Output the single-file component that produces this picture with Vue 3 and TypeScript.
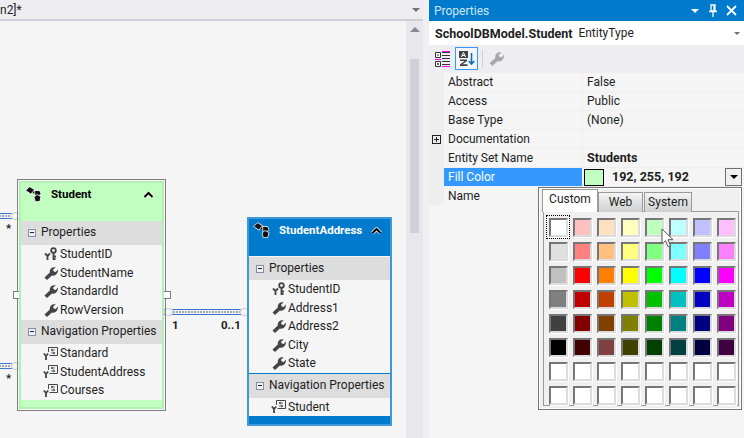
<template>
	<div class="shell">
		<section class="designer">
			<header class="doc-tab">
				<span class="doc-name">n2]*</span>
				<span class="doc-arrow"></span>
			</header>
			<div class="doc-body">
				<div class="canvas">
					<div class="link link-a"></div>
					<div class="link link-b"></div>
					<div class="link link-c"></div>
					<span class="end-label star-a">*</span>
					<span class="end-label star-b">*</span>
					<span class="end-label one">1</span>
					<span class="end-label many">0..1</span>

					<div class="selection">
						<i class="handle h-left"></i>
						<i class="handle h-right"></i>
					</div>

					<article v-for="entity in entities" :key="entity.name" :class="['entity', entity.kind]">
						<div class="entity-head">
							<svg class="entity-icon" width="17" height="16" viewBox="0 0 17 16">
								<path d="M7 5l5 3M12 6v6" stroke="#111" stroke-width="2.500" fill="none" />
								<path d="M.7 4.500 4.500.7 9.500 3.500 6 8.200z" fill="#111" stroke="#fff" stroke-width=".8" />
								<path d="M9.500 4.500h5l1.500 3-2 2.500h-4z" fill="#111" stroke="#fff" stroke-width=".8" />
								<path d="M9 11l3-2.500 4 2-1.200 5-4.500.2z" fill="#111" stroke="#fff" stroke-width=".8" />
							</svg>
							<span class="entity-name">{{ entity.name }}</span>
							<svg class="chevron" width="11" height="8" viewBox="0 0 11 8">
								<path d="M1.500 6 5.500 2l4 4" fill="none" stroke="#fff" stroke-width="3.600" />
								<path d="M1.500 6 5.500 2l4 4" fill="none" stroke="#000" stroke-width="2" />
							</svg>
						</div>

						<div class="section-bar">
							<i class="collapse"></i>
							<span>Properties</span>
						</div>
						<div class="rows">
							<div v-for="(prop, index) in entity.props" :key="prop" class="row">
								<svg v-if="index === 0" class="row-icon" width="14" height="14" viewBox="0 0 14 14">
									<circle cx="9.500" cy="3.500" r="2.300" fill="none" stroke="#444" stroke-width="1.800" />
									<path d="M9.500 6v7M9.500 9.500h2.500M9.500 12h2" stroke="#444" stroke-width="1.800" fill="none" />
									<path d="M1 6.500 3.500 9 6 6.500M3.500 9v4" stroke="#444" stroke-width="1.800" fill="none" />
								</svg>
								<svg v-else class="row-icon" width="14" height="14" viewBox="0 0 14 14">
									<path d="M.5 11.500 5.800 6.500C5.300 3 7.800.5 11.800 1.300L9 3.800l.8 1.700 1.900.4L13.900 3.500c.5 4-2.500 7-6 6L3 14z" fill="#444" />
								</svg>
								<span>{{ prop }}</span>
							</div>
						</div>

						<div class="section-bar nav-bar">
							<i class="collapse"></i>
							<span>Navigation Properties</span>
						</div>
						<div class="rows">
							<div v-for="nav in entity.navs" :key="nav" class="row">
								<svg class="row-icon nav-icon" width="16" height="15" viewBox="0 0 16 15">
									<path d="M5.500 6V1.500h9v8h-8" fill="#f5f5f5" stroke="#444" stroke-width="1" />
									<path d="M8 4h4M10 3l-2 1 2 1M8 7h4M10 6l2 1-2 1" stroke="#444" stroke-width=".8" fill="none" />
									<path d="M.8 7.500 3 10l2.200-2.500M3 10v4" stroke="#444" stroke-width="1.800" fill="none" />
								</svg>
								<span>{{ nav }}</span>
							</div>
						</div>
						<div class="entity-foot"></div>
					</article>
				</div>
				<aside class="vscroll">
					<span class="scroll-up"></span>
					<span class="scroll-thumb"></span>
				</aside>
			</div>
		</section>

		<div class="splitter"></div>

		<section class="props">
			<header class="props-title">
				<span>Properties</span>
				<span class="grip"></span>
				<span class="title-arrow"></span>
				<svg width="10" height="13" viewBox="0 0 10 13" class="pin">
					<path d="M3 1h4v6H3zM1 7.500h8M5 8v5M6 1.500v5" fill="none" stroke="#fff" stroke-width="1.300" />
				</svg>
				<svg width="11" height="11" viewBox="0 0 11 11" class="close">
					<path d="M1 1l9 9M10 1l-9 9" stroke="#fff" stroke-width="1.800" />
				</svg>
			</header>
			<div class="object-row">
				<b>SchoolDBModel.Student</b>
				<span>EntityType</span>
				<i class="object-arrow"></i>
			</div>
			<div class="toolbar">
				<svg width="16" height="16" viewBox="0 0 16 16">
					<path d="M.5 1.500h5v5h-5zM.5 10.500h5v5h-5z" fill="#fff" stroke="#333" />
					<path d="M2 4h2M2 13h2M3 12v2" stroke="#333" />
					<path d="M7 1.500h8M7 4.500h8M7 7.500h8M7 10.500h8M7 13.500h8" stroke="#333" />
					<path d="M0 8.500h6M7 .5h8M7 15.500h8" stroke="#f0f" />
				</svg>
				<button class="sort-btn" type="button">
					<svg width="16" height="15" viewBox="0 0 16 15">
						<rect x="0" y="0" width="9" height="7" fill="#444" />
						<path d="M2.500 6 4.500 1.500l2 4.500M3.300 4.500h2.400" fill="none" stroke="#fff" />
						<path d="M1 8.500h7v1.500l-4.500 3.200H8.500V15H1v-1.500L5.500 10H1z" fill="#444" />
						<path d="M12.500 2v11M9.800 10l2.700 3 2.700-3" fill="none" stroke="#0e70c0" stroke-width="1.600" />
					</svg>
				</button>
				<i class="tool-sep"></i>
				<svg width="15" height="15" viewBox="0 0 14 14">
					<path d="M.5 11.500 5.800 6.500C5.300 3 7.800.5 11.800 1.300L9 3.800l.8 1.700 1.900.4L13.900 3.500c.5 4-2.500 7-6 6L3 14z" fill="#a8a8a8" />
				</svg>
			</div>
			<div class="grid">
				<div v-for="row in gridRows" :key="row.name" class="grid-row">
					<div class="gutter">
						<i v-if="row.expandable" class="expander"></i>
					</div>
					<div :class="['cell-name', { selected: row.selected }]">{{ row.name }}</div>
					<div :class="['cell-value', { strong: row.strong }]">
						<template v-if="row.selected">
							<i class="swatch"></i>
							<span>{{ row.value }}</span>
							<button class="drop-btn" type="button"><i></i></button>
						</template>
						<template v-else>{{ row.value }}</template>
					</div>
				</div>
			</div>

			<div class="picker">
				<div class="tabs">
					<span v-for="tab in tabs" :key="tab" :class="['tab', tab.toLowerCase()]">{{ tab }}</span>
				</div>
				<div class="palette">
					<i
						v-for="(color, index) in palette"
						:key="index"
						:class="['color', { current: index === 0 }]"
						:style="{ background: color }"
					></i>
				</div>
				<svg class="cursor" width="14" height="21" viewBox="0 0 14 21">
					<path d="M1 1v15l3.500-3.300 2.500 6 2.500-1-2.500-6H12z" fill="#fff" stroke="#555" />
				</svg>
			</div>
		</section>
	</div>
</template>

<script setup lang="ts">
interface Entity {
	name: string;
	kind: 'green' | 'blue';
	props: string[];
	navs: string[];
}

interface GridRow {
	name: string;
	value: string;
	strong?: boolean;
	selected?: boolean;
	expandable?: boolean;
}

const entities: Entity[] = [
	{
		name: 'Student',
		kind: 'green',
		props: ['StudentID', 'StudentName', 'StandardId', 'RowVersion'],
		navs: ['Standard', 'StudentAddress', 'Courses'],
	},
	{
		name: 'StudentAddress',
		kind: 'blue',
		props: ['StudentID', 'Address1', 'Address2', 'City', 'State'],
		navs: ['Student'],
	},
];

const gridRows: GridRow[] = [
	{ name: 'Abstract', value: 'False' },
	{ name: 'Access', value: 'Public' },
	{ name: 'Base Type', value: '(None)' },
	{ name: 'Documentation', value: '', expandable: true },
	{ name: 'Entity Set Name', value: 'Students', strong: true },
	{ name: 'Fill Color', value: '192, 255, 192', strong: true, selected: true },
	{ name: 'Name', value: '' },
];

const tabs = ['Custom', 'Web', 'System'];

const palette: string[] = [
	'#ffffff', '#ffc0c0', '#ffe0c0', '#ffffc0', '#c0ffc0', '#c0ffff', '#c0c0ff', '#ffc0ff',
	'#e0e0e0', '#ff8080', '#ffc080', '#ffff80', '#80ff80', '#80ffff', '#8080ff', '#ff80ff',
	'#c0c0c0', '#ff0000', '#ff8000', '#ffff00', '#00ff00', '#00ffff', '#0000ff', '#ff00ff',
	'#808080', '#c00000', '#c04000', '#c0c000', '#00c000', '#00c0c0', '#0000c0', '#c000c0',
	'#404040', '#800000', '#804000', '#808000', '#008000', '#008080', '#000080', '#800080',
	'#000000', '#400000', '#804040', '#404000', '#004000', '#004040', '#000040', '#400040',
	'#ffffff', '#ffffff', '#ffffff', '#ffffff', '#ffffff', '#ffffff', '#ffffff', '#ffffff',
	'#ffffff', '#ffffff', '#ffffff', '#ffffff', '#ffffff', '#ffffff', '#ffffff', '#ffffff',
];
</script>

<style>
html, body {
	margin: 0;
	background: #f5f5f5;
	overflow: hidden;
}
</style>

<style scoped>
.shell {
	display: flex;
	width: 744px;
	height: 438px;
	overflow: hidden;
	font-family: Roboto, "Noto Sans", sans-serif;
	font-size: 12px;
	color: #1e1e1e;
	background: #f5f5f5;
}

.designer {
	width: 423px;
	display: flex;
	flex-direction: column;
}

.doc-tab {
	height: 19px;
	background: #eeeef2;
	border-bottom: 2px solid #cfcfda;
	display: flex;
	align-items: center;
	justify-content: space-between;
	padding-right: 3px;
}

.doc-arrow {
	border-left: 4px solid transparent;
	border-right: 4px solid transparent;
	border-top: 4px solid #717171;
}

.doc-body {
	flex: 1;
	display: flex;
	min-height: 0;
}

.canvas {
	flex: 1;
	position: relative;
	background: #f5f5f5;
}

.vscroll {
	width: 17px;
	background: #e8e8ec;
	display: flex;
	flex-direction: column;
	align-items: center;
}

.scroll-up {
	margin-top: 6px;
	border-left: 5px solid transparent;
	border-right: 5px solid transparent;
	border-bottom: 5px solid #868999;
}

.scroll-thumb {
	margin-top: 27px;
	width: 9px;
	height: 174px;
	background: #d0d0da;
}

.splitter {
	width: 6px;
	background: #f0f0f3;
}

/* connectors and end labels sit on the diagram canvas */
.link {
	position: absolute;
	height: 4px;
	border: 1px solid #3c78d8;
	background: repeating-linear-gradient(90deg, #a8a8a8 0 2px, #f5f5f5 2px 3px) center / 100% 2px no-repeat, #f0f2f6;
}

.link::after {
	content: "";
	position: absolute;
	top: -2px;
	width: 9px;
	height: 8px;
	border-radius: 50%;
	background: #f5f5f5;
	box-shadow: inset 0 0 0 1px #c4ccd8;
}

.link-a { left: -2px; top: 192px; width: 19px; }
.link-a::after { right: -2px; }
.link-b { left: -2px; top: 342px; width: 19px; }
.link-b::after { right: -2px; }
.link-c { left: 163px; top: 288px; width: 83px; }
.link-c::after { left: 0; }

.link-c::before {
	content: "";
	position: absolute;
	top: -2px;
	right: -2px;
	width: 9px;
	height: 8px;
	border-radius: 50%;
	background: #f5f5f5;
	box-shadow: inset 0 0 0 1px #c4ccd8;
}

.end-label {
	position: absolute;
	font-size: 11.500px;
	font-weight: 700;
	line-height: 14px;
}

.star-a { left: 6px; top: 200px; }
.star-b { left: 6px; top: 350px; }
.one { left: 172px; top: 297px; }
.many { left: 221px; top: 297px; }

.selection {
	position: absolute;
	left: 17px;
	top: 158px;
	width: 147px;
	height: 230px;
	border: 1px solid #808080;
}

.handle {
	position: absolute;
	top: 111px;
	width: 6px;
	height: 6px;
	background: #fff;
	border: 1px solid #808080;
}

.h-left { left: -5px; }
.h-right { right: -6px; }

.entity {
	position: absolute;
	display: flex;
	flex-direction: column;
	box-sizing: border-box;
	width: 145px;
	background: #f5f5f5;
}

.entity.green {
	left: 19px;
	top: 160px;
	height: 228px;
	border: 2px solid #b4f0b4;
	--head: #c0ffc0;
	--title: #000;
}

.entity.blue {
	left: 247px;
	top: 196px;
	height: 209px;
	border: 2px solid #3e97d8;
	--head: #007acc;
	--title: #fff;
}

.entity-head {
	flex: 0 0 auto;
	height: 38px;
	background: var(--head);
	display: flex;
	align-items: flex-start;
	padding: 3px 8px 0 4px;
	box-sizing: border-box;
}

.blue .entity-head {
	height: 37px;
}

.entity-icon {
	flex: none;
}

.entity-name {
	margin-left: 9px;
	flex: 1;
	font-size: 11.500px;
	font-weight: 700;
	line-height: 16px;
	color: var(--title);
}

.chevron {
	flex: none;
	margin-top: 5px;
}

.section-bar {
	flex: none;
	height: 24px;
	background: #dddddd;
	display: flex;
	align-items: center;
	padding-left: 7px;
	gap: 5px;
}

.section-bar span {
	position: relative;
	top: -1px;
}

.blue .section-bar {
	height: 23px;
	margin-top: 1px;
}

.green .nav-bar {
	margin-top: 1px;
}

.blue .nav-bar {
	height: 24px;
	border-top: 1px solid #007acc;
	margin-top: 0;
}

.collapse {
	position: relative;
	width: 8px;
	height: 8px;
	box-sizing: border-box;
	flex: none;
	background: #f0f0f6;
	border: 1px solid #8090a8;
}

.collapse::after {
	content: "";
	position: absolute;
	left: 1px;
	top: 2px;
	width: 4px;
	height: 1px;
	background: #222;
}

.rows {
	flex: none;
	display: flex;
	flex-direction: column;
}

.row {
	height: 18.500px;
	display: flex;
	align-items: center;
	padding-left: 23px;
	gap: 2px;
}

.row-icon {
	flex: none;
}

.nav-icon {
	margin-left: -1px;
	margin-right: -1px;
}

.entity-foot {
	margin-top: auto;
	height: 9px;
	background: var(--head);
}

.blue .entity-foot {
	height: 8px;
}

.props {
	flex: 1;
	position: relative;
	min-width: 0;
	background: #f5f5f5;
}

.props-title {
	height: 21px;
	background: #007acc;
	color: #d0e6f5;
	display: flex;
	align-items: center;
	padding: 0 7px 0 5px;
}

.grip {
	flex: 1;
	height: 6px;
	margin: 0 6px 0 8px;
	background-image: radial-gradient(#4da3dc 0.6px, transparent 0.7px);
	background-size: 3px 2px;
}

.title-arrow {
	border-left: 4px solid transparent;
	border-right: 4px solid transparent;
	border-top: 4px solid #fff;
	margin-right: 9px;
}

.pin {
	margin-right: 8px;
}

.object-row {
	height: 24px;
	background: #fff;
	display: flex;
	align-items: center;
	gap: 6px;
	padding-left: 6px;
	position: relative;
}

.object-row b {
	font-size: 12.500px;
}

.object-arrow {
	position: absolute;
	right: 4px;
	top: 11px;
	border-left: 3px solid transparent;
	border-right: 3px solid transparent;
	border-top: 3px solid #717171;
}

.toolbar {
	height: 27px;
	background: #eeeef2;
	display: flex;
	align-items: center;
	padding-left: 6px;
	gap: 4px;
}

.sort-btn {
	width: 23px;
	height: 23px;
	padding: 0;
	box-sizing: border-box;
	display: flex;
	align-items: center;
	justify-content: center;
	background: #f5f5f8;
	border: 1px solid #3399ff;
}

.tool-sep {
	width: 1px;
	height: 17px;
	background: #ccced8;
	margin-right: 2px;
}

.grid {
	display: flex;
	flex-direction: column;
}

.grid-row {
	height: 19px;
	display: flex;
	align-items: stretch;
	box-sizing: border-box;
	border-top: 1px solid #eeeeee;
}

.gutter {
	flex: none;
	width: 15px;
	background: #eeeeee;
	display: flex;
	align-items: center;
	padding-left: 3px;
	box-sizing: border-box;
}

.expander {
	width: 9px;
	height: 9px;
	box-sizing: border-box;
	border: 1px solid #222;
	background: linear-gradient(#222, #222) center / 5px 1px no-repeat, linear-gradient(#222, #222) center / 1px 5px no-repeat;
}

.cell-name {
	flex: none;
	width: 139px;
	padding-left: 4px;
	box-sizing: border-box;
	line-height: 18px;
	border-right: 1px solid #eeeeee;
}

.cell-name.selected {
	background: #3399ff;
	color: #fff;
}

.cell-value {
	flex: 1;
	padding-left: 4px;
	line-height: 18px;
	display: flex;
	align-items: center;
	min-width: 0;
}

.cell-value.strong {
	font-size: 12.500px;
	font-weight: 700;
}

.swatch {
	width: 20px;
	height: 17px;
	box-sizing: border-box;
	margin-left: -3px;
	border: 1px solid #000;
	background: #c0ffc0;
	margin-right: 8px;
}

.drop-btn {
	position: absolute;
	right: 2px;
	width: 17px;
	height: 18px;
	padding: 0;
	background: #f0f0f0;
	border: 1px solid #707070;
	display: flex;
	align-items: center;
	justify-content: center;
}

.drop-btn i {
	border-left: 4px solid transparent;
	border-right: 4px solid transparent;
	border-top: 4px solid #000;
}

/* dropdown popup over the property grid */
.picker {
	position: absolute;
	left: 109px;
	top: 187px;
	width: 204px;
	height: 223px;
	box-sizing: border-box;
	background: #f0f0f0;
	border: 1px solid #767676;
	padding: 1px 2px 3px 3px;
	display: flex;
	flex-direction: column;
	box-shadow: inset 0 0 0 1px #fff;
}

.tabs {
	display: flex;
	height: 23px;
	flex: none;
	align-items: flex-end;
	position: relative;
	z-index: 1;
	margin-bottom: -1px;
}

.tab {
	height: 20px;
	box-sizing: border-box;
	border: 1px solid #999;
	border-bottom: 0;
	line-height: 18px;
	text-align: center;
	background: linear-gradient(#f4f4f4, #cfcfcf);
}

.tab.custom {
	height: 23px;
	width: 56px;
	background: #fff;
	line-height: 19px;
}

.tab.web {
	width: 45px;
}

.tab.system {
	width: 48px;
	margin-left: 1px;
}

.palette {
	flex: 1;
	margin-left: 1px;
	border: 1px solid #999;
	background: #f0f0f0;
	padding: 6px 0 0 5px;
	display: grid;
	grid-template-columns: repeat(8, 19px);
	grid-auto-rows: 19px;
	gap: 5px;
}

.color {
	box-sizing: border-box;
	position: relative;
	border: 2px solid;
	border-color: #767676 #dcdcdc #dcdcdc #767676;
	box-shadow: 1px 1px 0 #fff;
}

.color.current::after {
	content: "";
	position: absolute;
	left: -5px;
	top: -5px;
	width: 22px;
	height: 22px;
	border: 1px dotted #000;
}

.cursor {
	position: absolute;
	left: 122px;
	top: 40px;
}
</style>
